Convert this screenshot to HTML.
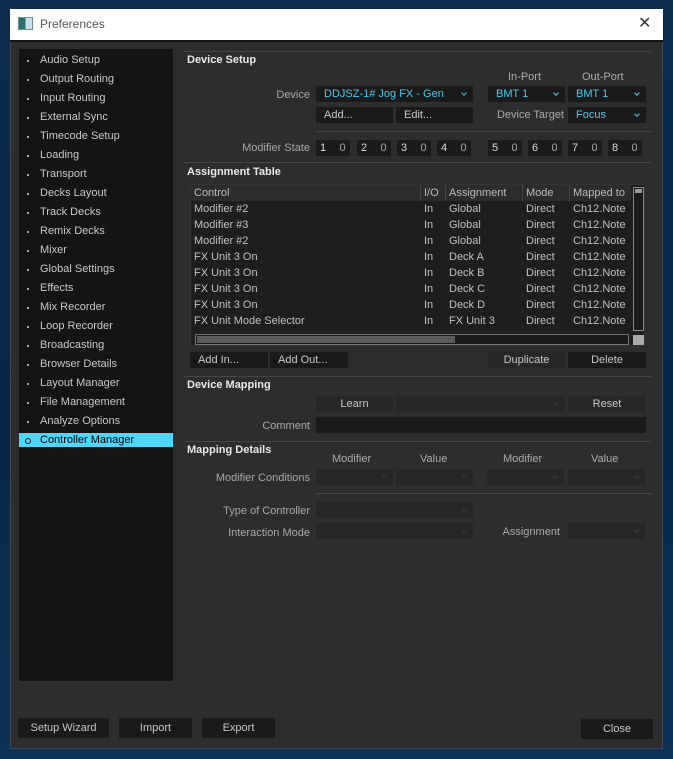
<!DOCTYPE html>
<html><head><style>
*{margin:0;padding:0;box-sizing:border-box}
body{width:673px;height:759px;background:linear-gradient(180deg,#0b2a4c,#092848 60%,#0c3156);position:relative;overflow:hidden;font-family:"Liberation Sans",sans-serif;font-size:11px;color:#c8c8c8}
.a{position:absolute}
.t{position:absolute;white-space:nowrap}
.btn{position:absolute;background:#1a1a1a;color:#c8c8c8;text-align:center;line-height:17px;height:16px}
.dd{position:absolute;background:#1a1a1a;height:16px;line-height:17px;padding-left:8px;color:#4cc8f0}
.dd:after{content:"";position:absolute;right:7px;top:5px;width:3px;height:3px;border-right:1px solid currentColor;border-bottom:1px solid currentColor;transform:rotate(45deg)}
.dd.e{color:#3a3a3a;background:#262626}
.lbl{position:absolute;text-align:right;color:#a8a8a8;white-space:nowrap;margin-top:1px}
.h{position:absolute;font-weight:bold;color:#e8e8e8;font-size:11px;margin-top:1px}
.hr{position:absolute;height:1px;background:#444}
.side div{height:19px;line-height:19px;padding-left:21px;position:relative;color:#c8c8c8}
.side div:before{content:"";position:absolute;left:8px;top:9px;width:2px;height:2px;background:#aaa}
.side div.sel{background:#4fd6f8;color:#000;height:14px;line-height:15px;margin-top:2px}
.side div.sel:before{width:4px;height:4px;border:1px solid #222;background:none;top:5px;left:6px;border-radius:50%}
.row{position:absolute;left:0;height:16px;line-height:17px;width:440px;color:#c0c0c0}
.row span{position:absolute}
.mod{position:absolute;width:34px;height:16px;background:#1a1a1a;line-height:17px}
.mod b{font-weight:normal;position:absolute;left:4px;color:#ddd}
.mod i{font-style:normal;position:absolute;left:20px;color:#aaa;width:13px;text-align:center}
</style></head><body>
<div class="a" style="left:10px;top:9px;width:653px;height:740px;background:#2d2d2d;border:1px solid #3a4a5a"></div>
<div class="a" style="left:10px;top:9px;width:653px;height:31px;background:#fff"></div>
<div class="a" style="left:18px;top:17px;width:15px;height:13px;border:1px solid #789;background:linear-gradient(90deg,#2d6f6a 50%,#cde 50%)"></div>
<div class="t" style="left:40px;top:17px;font-size:12px;color:#555">Preferences</div>
<div class="t" style="left:638px;top:13px;font-size:16px;color:#333">✕</div>
<div class="a" style="left:10px;top:40px;width:653px;height:2px;background:#111"></div>

<div class="a side" style="left:19px;top:49px;width:154px;height:632px;background:#141414;padding-top:2px">
<div>Audio Setup</div><div>Output Routing</div><div>Input Routing</div><div>External Sync</div><div>Timecode Setup</div><div>Loading</div><div>Transport</div><div>Decks Layout</div><div>Track Decks</div><div>Remix Decks</div><div>Mixer</div><div>Global Settings</div><div>Effects</div><div>Mix Recorder</div><div>Loop Recorder</div><div>Broadcasting</div><div>Browser Details</div><div>Layout Manager</div><div>File Management</div><div>Analyze Options</div><div class="sel">Controller Manager</div>
</div>

<div class="hr" style="left:183px;top:51px;width:468px"></div>
<div class="h" style="left:187px;top:53px">Device Setup</div>
<div class="t" style="left:508px;top:71px;color:#aaa">In-Port</div>
<div class="t" style="left:582px;top:71px;color:#aaa">Out-Port</div>
<div class="lbl" style="left:220px;width:90px;top:88px">Device</div>
<div class="dd" style="left:316px;top:86px;width:157px">DDJSZ-1# Jog FX - Gen</div>
<div class="dd" style="left:488px;top:86px;width:77px">BMT 1</div>
<div class="dd" style="left:568px;top:86px;width:78px">BMT 1</div>
<div class="btn" style="left:316px;top:107px;width:77px;text-align:left;padding-left:8px">Add...</div>
<div class="btn" style="left:396px;top:107px;width:77px;text-align:left;padding-left:8px">Edit...</div>
<div class="lbl" style="left:480px;width:84px;top:108px">Device Target</div>
<div class="dd" style="left:568px;top:107px;width:78px">Focus</div>
<div class="hr" style="left:316px;top:131px;width:336px"></div>
<div class="lbl" style="left:200px;width:110px;top:141px">Modifier State</div>
<div class="mod" style="left:316px;top:140px"><b>1</b><i>0</i></div>
<div class="mod" style="left:357px;top:140px"><b>2</b><i>0</i></div>
<div class="mod" style="left:397px;top:140px"><b>3</b><i>0</i></div>
<div class="mod" style="left:437px;top:140px"><b>4</b><i>0</i></div>
<div class="mod" style="left:488px;top:140px"><b>5</b><i>0</i></div>
<div class="mod" style="left:528px;top:140px"><b>6</b><i>0</i></div>
<div class="mod" style="left:568px;top:140px"><b>7</b><i>0</i></div>
<div class="mod" style="left:608px;top:140px"><b>8</b><i>0</i></div>
<div class="hr" style="left:183px;top:162px;width:468px"></div>
<div class="h" style="left:187px;top:165px">Assignment Table</div>

<div class="a" style="left:190px;top:184px;width:455px;height:162px;background:#1e1e1e;border:1px solid #333;overflow:hidden">
<div class="a" style="left:0;top:0;width:440px;height:16px;background:#2c2c2c"></div>
<div class="row" style="top:0;color:#bbb"><span style="left:3px">Control</span><span style="left:233px">I/O</span><span style="left:258px">Assignment</span><span style="left:335px">Mode</span><span style="left:382px">Mapped to</span></div>
<div class="a" style="left:229px;top:0;width:1px;height:16px;background:#444"></div>
<div class="a" style="left:254px;top:0;width:1px;height:16px;background:#444"></div>
<div class="a" style="left:331px;top:0;width:1px;height:16px;background:#444"></div>
<div class="a" style="left:378px;top:0;width:1px;height:16px;background:#444"></div>
<div class="row" style="top:16px"><span style="left:3px">Modifier #2</span><span style="left:233px">In</span><span style="left:258px">Global</span><span style="left:335px">Direct</span><span style="left:382px">Ch12.Note</span></div>
<div class="row" style="top:32px"><span style="left:3px">Modifier #3</span><span style="left:233px">In</span><span style="left:258px">Global</span><span style="left:335px">Direct</span><span style="left:382px">Ch12.Note</span></div>
<div class="row" style="top:48px"><span style="left:3px">Modifier #2</span><span style="left:233px">In</span><span style="left:258px">Global</span><span style="left:335px">Direct</span><span style="left:382px">Ch12.Note</span></div>
<div class="row" style="top:64px"><span style="left:3px">FX Unit 3 On</span><span style="left:233px">In</span><span style="left:258px">Deck A</span><span style="left:335px">Direct</span><span style="left:382px">Ch12.Note</span></div>
<div class="row" style="top:80px"><span style="left:3px">FX Unit 3 On</span><span style="left:233px">In</span><span style="left:258px">Deck B</span><span style="left:335px">Direct</span><span style="left:382px">Ch12.Note</span></div>
<div class="row" style="top:96px"><span style="left:3px">FX Unit 3 On</span><span style="left:233px">In</span><span style="left:258px">Deck C</span><span style="left:335px">Direct</span><span style="left:382px">Ch12.Note</span></div>
<div class="row" style="top:112px"><span style="left:3px">FX Unit 3 On</span><span style="left:233px">In</span><span style="left:258px">Deck D</span><span style="left:335px">Direct</span><span style="left:382px">Ch12.Note</span></div>
<div class="row" style="top:128px"><span style="left:3px">FX Unit Mode Selector</span><span style="left:233px">In</span><span style="left:258px">FX Unit 3</span><span style="left:335px">Direct</span><span style="left:382px">Ch12.Note</span></div>
<div class="a" style="left:442px;top:2px;width:11px;height:144px;border:1px solid #888;background:#1a1a1a"></div>
<div class="a" style="left:444px;top:4px;width:7px;height:4px;background:#999"></div>
<div class="a" style="left:0;top:146px;width:440px;height:16px;background:#1e1e1e"></div>
<div class="a" style="left:4px;top:149px;width:434px;height:11px;border:1px solid #777;background:#1a1a1a"></div>
<div class="a" style="left:6px;top:151px;width:258px;height:7px;background:#5a5a5a"></div>
<div class="a" style="left:442px;top:150px;width:11px;height:11px;background:#aaa"></div>
</div>

<div class="btn" style="left:190px;top:352px;width:78px;text-align:left;padding-left:8px">Add In...</div>
<div class="btn" style="left:270px;top:352px;width:78px;text-align:left;padding-left:8px">Add Out...</div>
<div class="btn" style="left:488px;top:352px;width:77px;background:#272727">Duplicate</div>
<div class="btn" style="left:568px;top:352px;width:78px">Delete</div>
<div class="hr" style="left:183px;top:376px;width:468px"></div>
<div class="h" style="left:187px;top:378px">Device Mapping</div>
<div class="btn" style="left:316px;top:396px;width:77px;background:#262626">Learn</div>
<div class="dd e" style="left:396px;top:396px;width:169px"></div>
<div class="btn" style="left:568px;top:396px;width:78px;background:#262626">Reset</div>
<div class="lbl" style="left:220px;width:90px;top:419px">Comment</div>
<div class="a" style="left:316px;top:417px;width:330px;height:16px;background:#1a1a1a"></div>
<div class="hr" style="left:183px;top:441px;width:468px"></div>
<div class="h" style="left:187px;top:443px">Mapping Details</div>
<div class="t" style="left:332px;top:453px;color:#aaa">Modifier</div>
<div class="t" style="left:420px;top:453px;color:#aaa">Value</div>
<div class="t" style="left:503px;top:453px;color:#aaa">Modifier</div>
<div class="t" style="left:591px;top:453px;color:#aaa">Value</div>
<div class="lbl" style="left:180px;width:130px;top:471px">Modifier Conditions</div>
<div class="dd e" style="left:316px;top:469px;width:77px"></div>
<div class="dd e" style="left:396px;top:469px;width:77px"></div>
<div class="dd e" style="left:487px;top:469px;width:77px"></div>
<div class="dd e" style="left:568px;top:469px;width:78px"></div>
<div class="hr" style="left:316px;top:493px;width:336px"></div>
<div class="lbl" style="left:180px;width:130px;top:504px">Type of Controller</div>
<div class="dd e" style="left:316px;top:502px;width:157px"></div>
<div class="lbl" style="left:180px;width:130px;top:526px">Interaction Mode</div>
<div class="dd e" style="left:316px;top:523px;width:157px"></div>
<div class="lbl" style="left:480px;width:80px;top:525px">Assignment</div>
<div class="dd e" style="left:568px;top:523px;width:78px"></div>

<div class="btn" style="left:18px;top:718px;width:91px;height:20px;line-height:21px">Setup Wizard</div>
<div class="btn" style="left:119px;top:718px;width:73px;height:20px;line-height:21px">Import</div>
<div class="btn" style="left:202px;top:718px;width:73px;height:20px;line-height:21px">Export</div>
<div class="btn" style="left:581px;top:719px;width:72px;height:20px;line-height:21px">Close</div>
</body></html>
